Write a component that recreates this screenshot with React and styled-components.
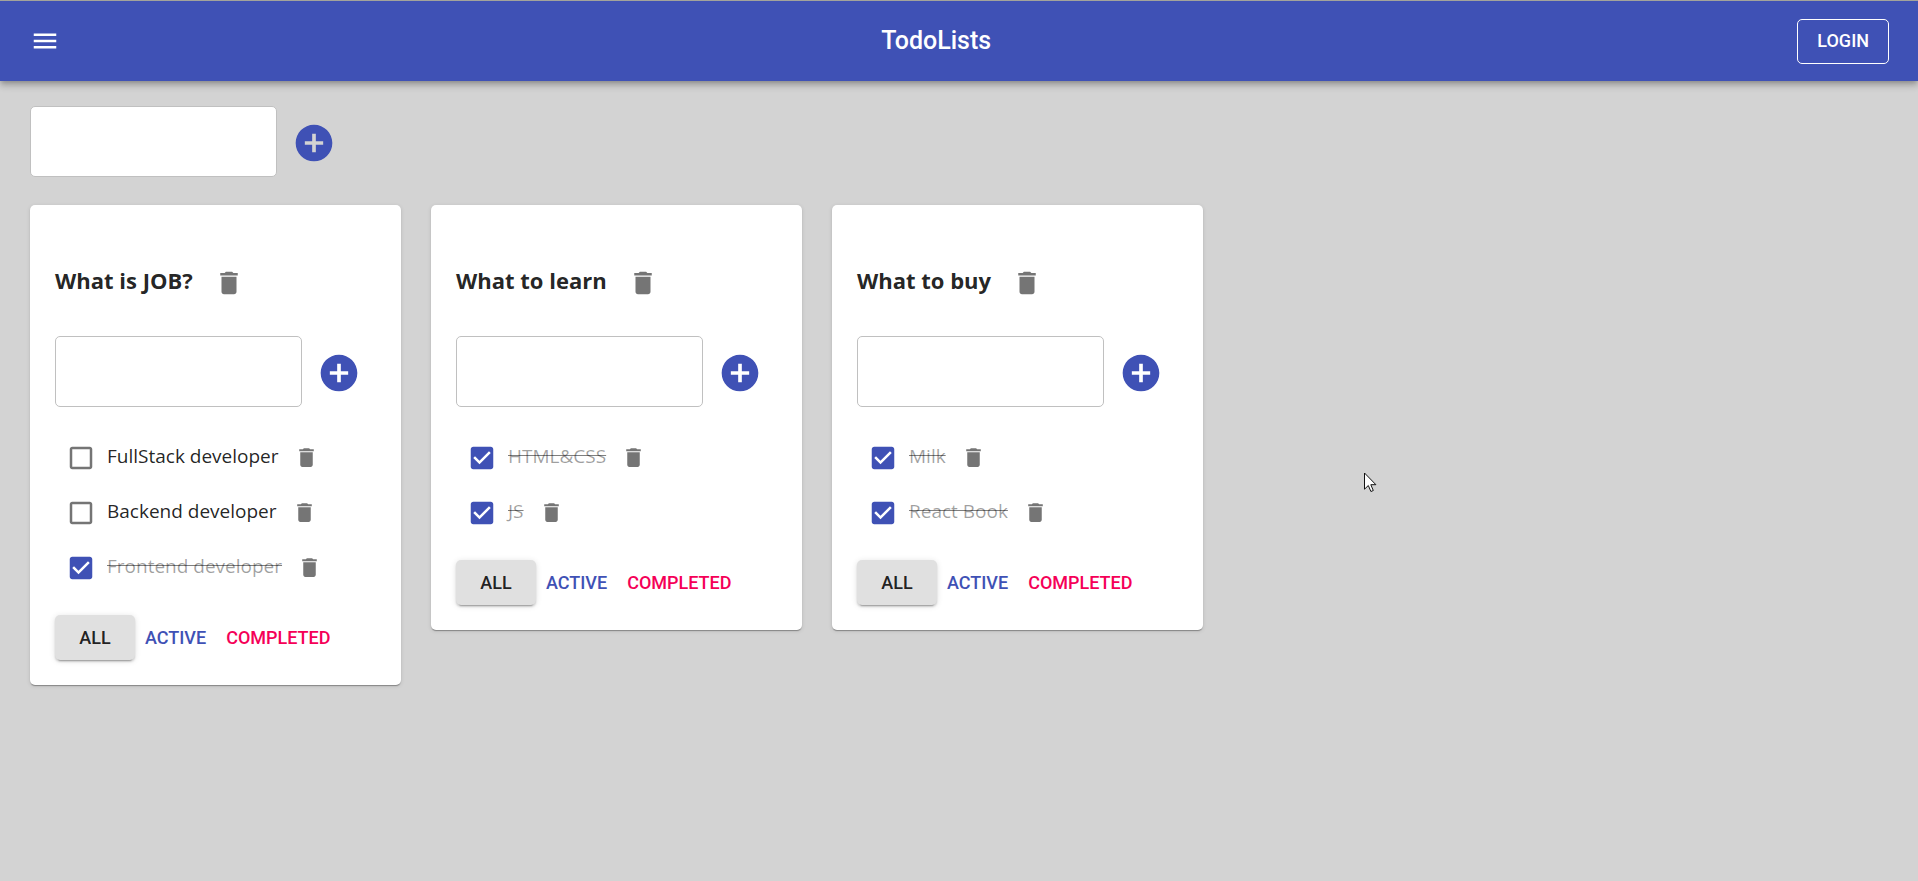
import React, { useState } from "react";
import styled, { createGlobalStyle, css } from "styled-components";

const GlobalStyle = createGlobalStyle`
  *, *::before, *::after { box-sizing: border-box; }
  body {
    margin: 0;
    background: #d3d3d3;
    color: rgba(0, 0, 0, 0.87);
    font-family: "Segoe UI", "Open Sans", "Noto Sans", sans-serif;
    font-size: 19px;
  }
`;

const AppBar = styled.header`
  display: flex;
  align-items: center;
  justify-content: space-between;
  height: 81px;
  padding: 0 29px 0 15px;
  border-top: 1px solid #a3a39b;
  background: #3f51b5;
  color: #fff;
  box-shadow:
    0 2px 5px -1px rgba(0, 0, 0, 0.2),
    0 5px 6px 0 rgba(0, 0, 0, 0.14),
    0 1px 12px 0 rgba(0, 0, 0, 0.12);
`;

const AppTitle = styled.h1`
  margin: 0;
  font: 500 25px/40px Roboto, sans-serif;
`;

const IconButton = styled.button`
  display: flex;
  flex: none;
  padding: 15px;
  border: 0;
  border-radius: 50%;
  background: transparent;
  color: ${({ $tone }) => $tone || "#757575"};
  cursor: pointer;
`;

const Icon = styled.svg`
  display: block;
  width: ${({ $size }) => $size}px;
  height: ${({ $size }) => $size}px;
  fill: currentColor;
`;

const tones = {
  default: "rgba(0, 0, 0, 0.87)",
  primary: "#3f51b5",
  secondary: "#f50057",
};

const Button = styled.button`
  height: 45px;
  padding: 0 10px;
  border: 0;
  border-radius: 5px;
  background: transparent;
  color: ${({ $tone }) => tones[$tone] || "inherit"};
  font: 500 18px/30px Roboto, sans-serif;
  text-transform: uppercase;
  cursor: pointer;

  ${({ $selected }) =>
    $selected &&
    css`
      background: #e0e0e0;
      box-shadow:
        0 4px 1px -3px rgba(0, 0, 0, 0.2),
        0 2px 2px 0 rgba(0, 0, 0, 0.14),
        0 1px 6px 0 rgba(0, 0, 0, 0.12);
    `}
`;

const OutlinedButton = styled(Button)`
  padding: 0 19px;
  border: 1px solid #fff;
`;

const FilterButton = styled(Button)`
  min-width: 80px;
`;

const Main = styled.main`
  display: flex;
  flex-direction: column;
  gap: 25px;
  padding: 25px 30px;
`;

const Form = styled.form`
  display: flex;
  align-items: flex-start;
`;

const TextBox = styled.input`
  width: 247px;
  height: 71px;
  padding: 0 18px;
  border: 1px solid #c0c0c0;
  border-radius: 5px;
  outline: 0;
  background: #fff;
  color: inherit;
  font: 400 20px Roboto, sans-serif;
`;

const Board = styled.div`
  display: flex;
  flex-wrap: wrap;
  align-items: flex-start;
  gap: 30px;
`;

const Card = styled.section`
  padding: 25px;
  border-radius: 5px;
  background: #fff;
  box-shadow:
    0 2px 1px -1px rgba(0, 0, 0, 0.2),
    0 1px 1px 0 rgba(0, 0, 0, 0.14),
    0 1px 4px 0 rgba(0, 0, 0, 0.12);
`;

const CardHeader = styled.div`
  display: flex;
  align-items: center;
  gap: 6px;
  margin: 23px 0;
`;

const CardTitle = styled.h2`
  margin: 0;
  padding-bottom: 6px;
  font-size: 22px;
  font-weight: 700;
  line-height: 30px;
`;

const TaskList = styled.ul`
  margin: 20px 0;
  padding: 0;
  list-style: none;
`;

const Task = styled.li`
  display: flex;
  align-items: center;
  height: 55px;
`;

const TaskLabel = styled.label`
  display: flex;
  align-items: center;
  cursor: pointer;
`;

const Tick = styled.span`
  position: relative;
  padding: 11px;
  color: ${({ $on }) => ($on ? "#3f51b5" : "#757575")};
`;

const TickInput = styled.input`
  position: absolute;
  inset: 0;
  width: 100%;
  height: 100%;
  margin: 0;
  opacity: 0;
  cursor: inherit;
`;

const TaskText = styled.span`
  padding-bottom: 3px;
  line-height: 27px;
  white-space: nowrap;
  ${({ $done }) =>
    $done &&
    css`
      color: rgba(0, 0, 0, 0.38);
      text-decoration: line-through rgba(0, 0, 0, 0.5);
    `}
`;

const Filters = styled.div`
  display: flex;
`;

const Pointer = styled.svg`
  position: fixed;
  top: 472px;
  left: 1364px;
  width: 13px;
  height: 21px;
  pointer-events: none;
`;

const paths = {
  menu: "M3 18h18v-2H3v2zm0-5h18v-2H3v2zm0-7v2h18V6H3z",
  trash: "M6 19c0 1.1.9 2 2 2h8c1.1 0 2-.9 2-2V7H6v12zM19 4h-3.5l-1-1h-5l-1 1H5v2h14V4z",
  add: "M12 2C6.48 2 2 6.48 2 12s4.48 10 10 10 10-4.48 10-10S17.52 2 12 2zm5 11h-4v4h-2v-4H7v-2h4V7h2v4h4v2z",
  on: "M19 3H5c-1.11 0-2 .9-2 2v14c0 1.1.89 2 2 2h14c1.11 0 2-.9 2-2V5c0-1.1-.89-2-2-2zm-9 14l-5-5 1.41-1.41L10 14.17l7.59-7.59L19 8l-9 9z",
  off: "M19 5v14H5V5h14m0-2H5c-1.1 0-2 .9-2 2v14c0 1.1.9 2 2 2h14c1.1 0 2-.9 2-2V5c0-1.1-.9-2-2-2z",
};

function Glyph({ name, size }) {
  return (
    <Icon viewBox="0 0 24 24" $size={size} aria-hidden="true">
      <path d={paths[name]} />
    </Icon>
  );
}

function AddItemForm({ label, onAdd }) {
  const [title, setTitle] = useState("");
  const submit = (event) => {
    event.preventDefault();
    if (title.trim()) {
      onAdd(title.trim());
      setTitle("");
    }
  };
  return (
    <Form onSubmit={submit}>
      <TextBox
        type="text"
        aria-label={label}
        value={title}
        onChange={(event) => setTitle(event.target.value)}
      />
      <IconButton type="submit" aria-label={label} $tone="#3f51b5">
        <Glyph name="add" size={44} />
      </IconButton>
    </Form>
  );
}

const filters = [
  { name: "All", tone: "default" },
  { name: "Active", tone: "primary" },
  { name: "Completed", tone: "secondary" },
];

function TodoList({ title, initialTasks, onRemove }) {
  const [tasks, setTasks] = useState(initialTasks);
  const [filter, setFilter] = useState("All");
  const toggle = (task) =>
    setTasks(tasks.map((t) => (t === task ? { ...t, done: !t.done } : t)));
  const shown = tasks.filter(
    (t) => filter === "All" || t.done === (filter === "Completed")
  );

  return (
    <Card>
      <CardHeader>
        <CardTitle>{title}</CardTitle>
        <IconButton type="button" aria-label="Delete list" onClick={onRemove}>
          <Glyph name="trash" size={30} />
        </IconButton>
      </CardHeader>
      <AddItemForm
        label="Add task"
        onAdd={(text) => setTasks([{ text, done: false }, ...tasks])}
      />
      <TaskList>
        {shown.map((task) => (
          <Task key={task.text}>
            <TaskLabel>
              <Tick $on={task.done}>
                <TickInput
                  type="checkbox"
                  checked={task.done}
                  onChange={() => toggle(task)}
                />
                <Glyph name={task.done ? "on" : "off"} size={30} />
              </Tick>
              <TaskText $done={task.done}>{task.text}</TaskText>
            </TaskLabel>
            <IconButton
              type="button"
              aria-label="Delete task"
              onClick={() => setTasks(tasks.filter((t) => t !== task))}
            >
              <Glyph name="trash" size={25} />
            </IconButton>
          </Task>
        ))}
      </TaskList>
      <Filters>
        {filters.map(({ name, tone }) => (
          <FilterButton
            key={name}
            type="button"
            $tone={tone}
            $selected={filter === name}
            onClick={() => setFilter(name)}
          >
            {name}
          </FilterButton>
        ))}
      </Filters>
    </Card>
  );
}

const initialLists = [
  {
    title: "What is JOB?",
    tasks: [
      { text: "FullStack developer", done: false },
      { text: "Backend developer", done: false },
      { text: "Frontend developer", done: true },
    ],
  },
  {
    title: "What to learn",
    tasks: [
      { text: "HTML&CSS", done: true },
      { text: "JS", done: true },
    ],
  },
  {
    title: "What to buy",
    tasks: [
      { text: "Milk", done: true },
      { text: "React Book", done: true },
    ],
  },
];

export default function App() {
  const [lists, setLists] = useState(initialLists);
  return (
    <>
      <GlobalStyle />
      <AppBar>
        <IconButton type="button" aria-label="Menu" $tone="#fff">
          <Glyph name="menu" size={30} />
        </IconButton>
        <AppTitle>TodoLists</AppTitle>
        <OutlinedButton type="button">Login</OutlinedButton>
      </AppBar>
      <Main>
        <AddItemForm
          label="Add list"
          onAdd={(title) => setLists([{ title, tasks: [] }, ...lists])}
        />
        <Board>
          {lists.map((list) => (
            <TodoList
              key={list.title}
              title={list.title}
              initialTasks={list.tasks}
              onRemove={() => setLists(lists.filter((l) => l !== list))}
            />
          ))}
        </Board>
      </Main>
      <Pointer viewBox="0 0 13 21" aria-hidden="true">
        <path
          d="M0.5 1v16.2l3.8-3.7 2.6 6 2.4-1-2.5-5.8h5.1z"
          fill="#fff"
          stroke="#111"
          strokeWidth="1"
        />
      </Pointer>
    </>
  );
}
